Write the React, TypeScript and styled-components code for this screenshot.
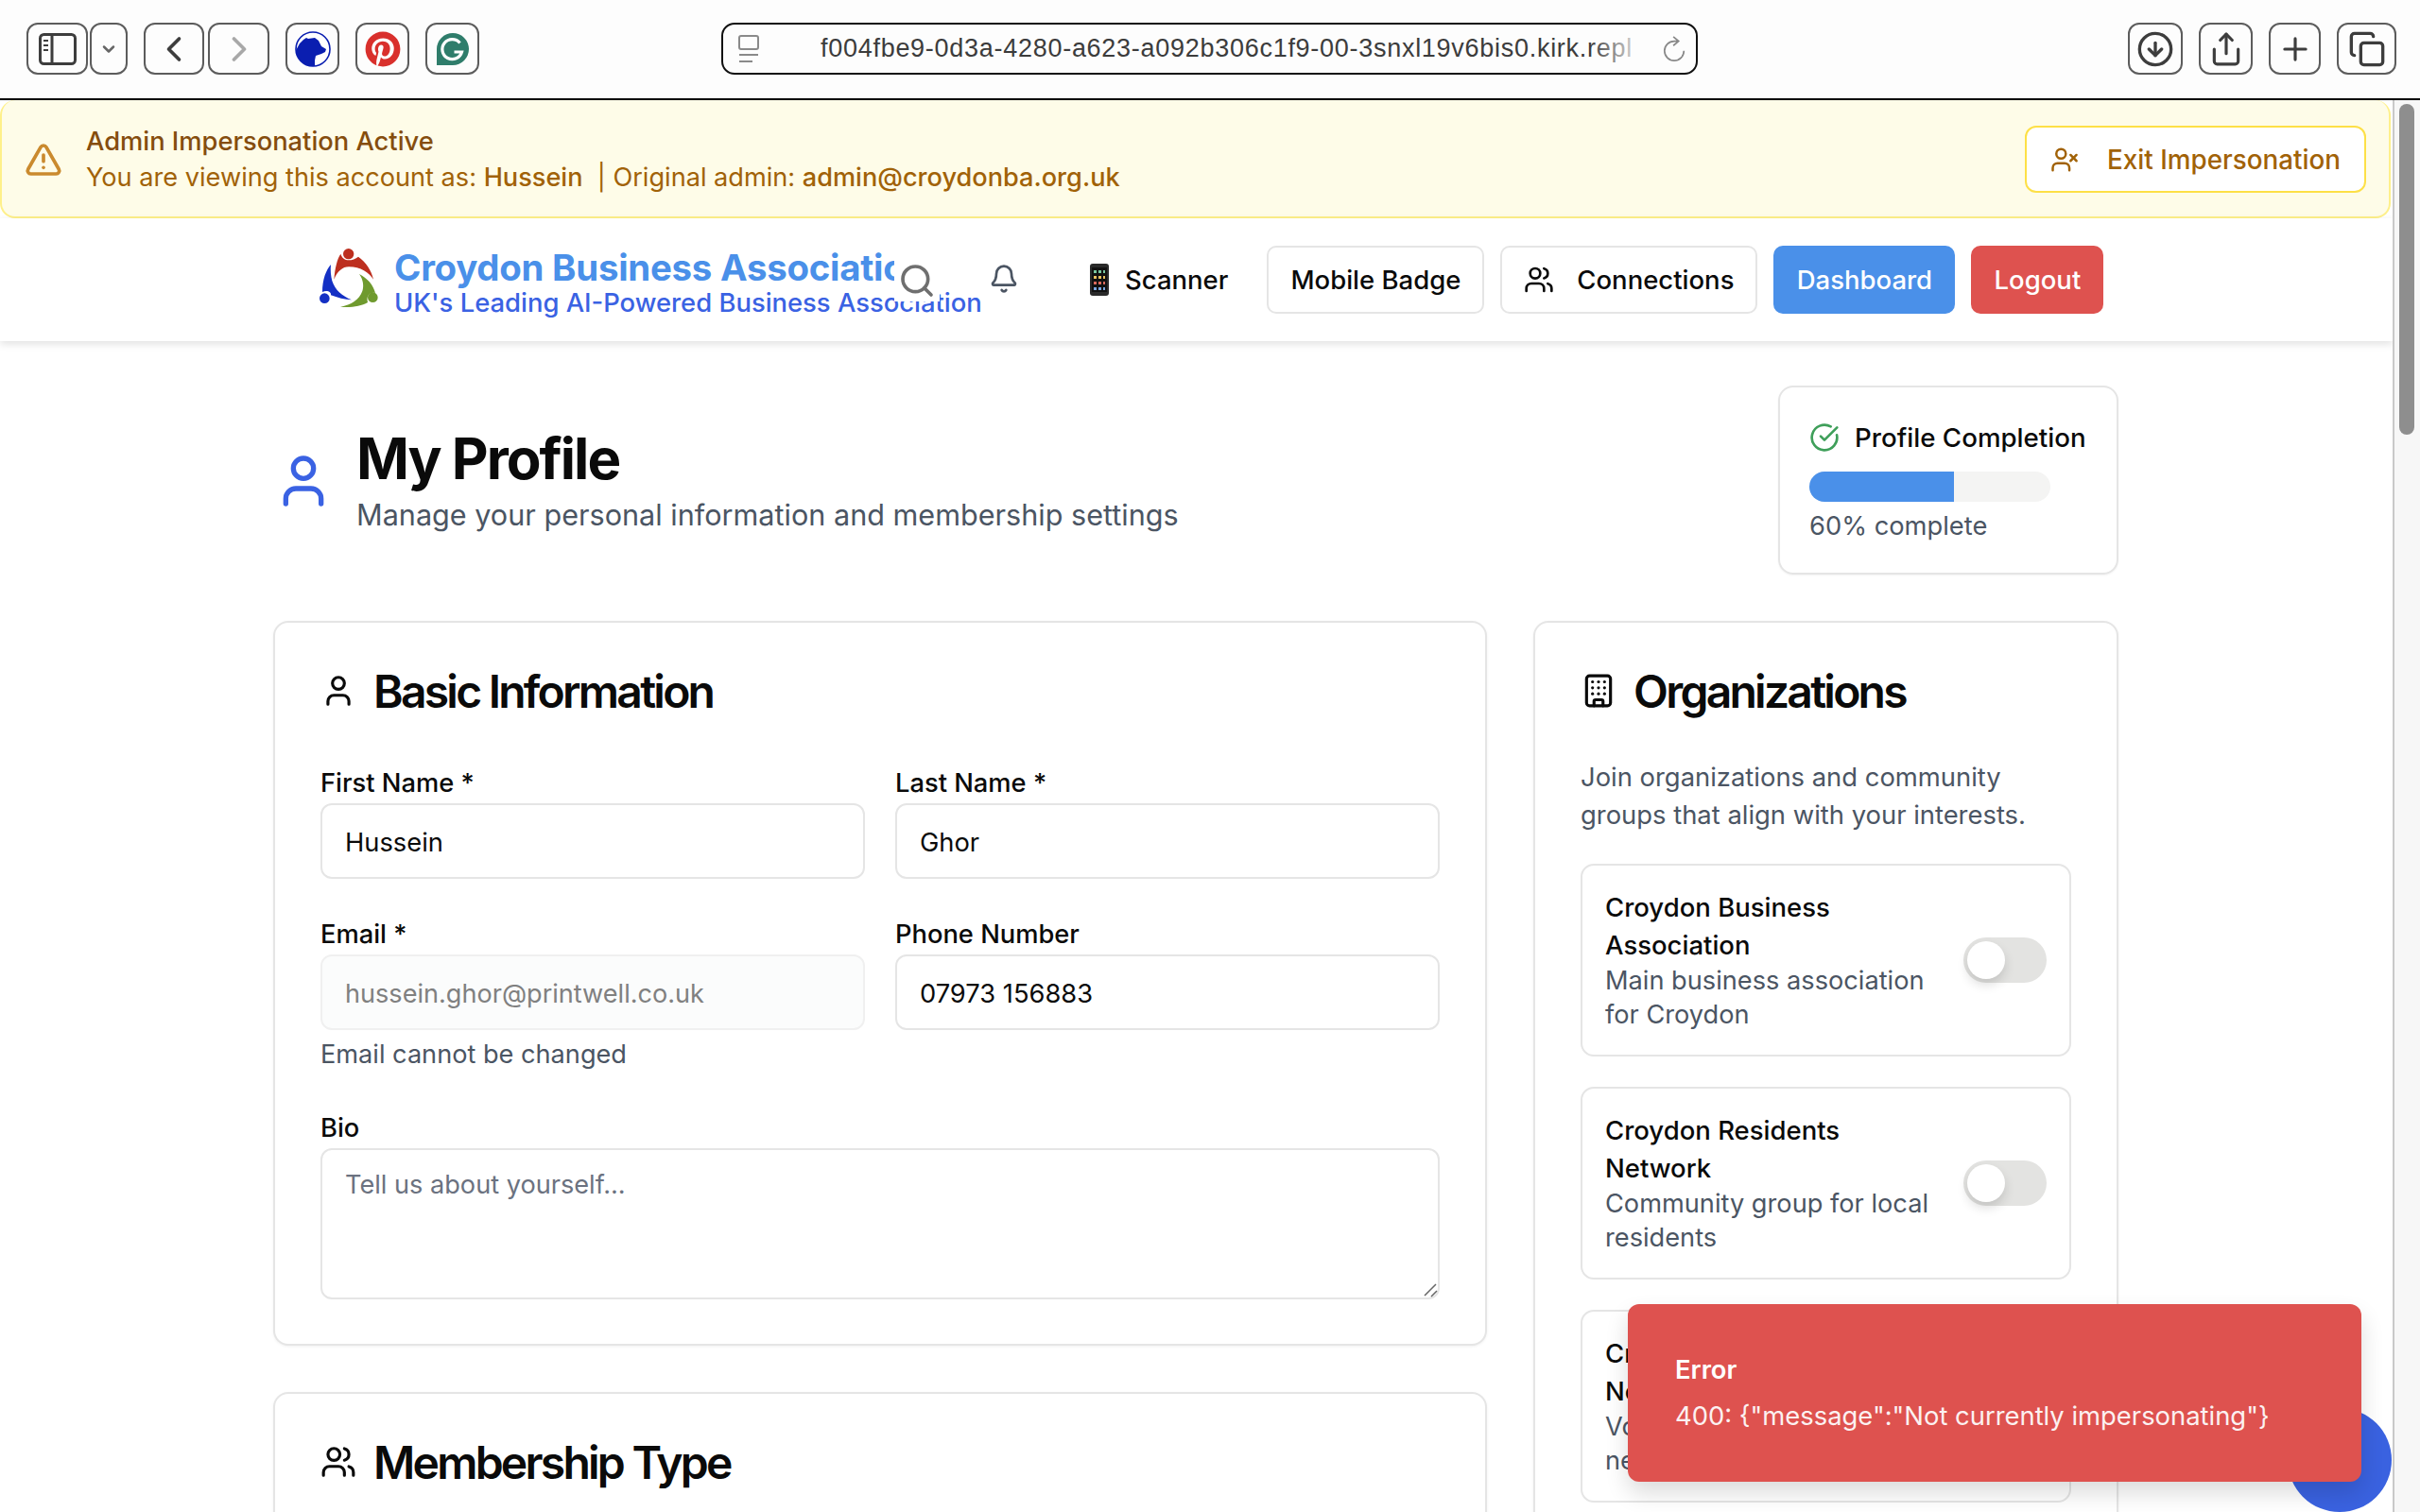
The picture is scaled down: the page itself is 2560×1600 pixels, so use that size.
import React from "react";
import styled, { createGlobalStyle } from "styled-components";
import { FaPinterest } from "react-icons/fa";
import {
  Bell,
  Building,
  ChevronDown,
  ChevronLeft,
  ChevronRight,
  CircleArrowDown,
  CircleCheckBig,
  Copy,
  Plus,
  Search,
  Share,
  TriangleAlert,
  User,
  Users,
  UserX,
} from "lucide-react";

const GlobalStyle = createGlobalStyle`
  html, body {
    margin: 0;
    padding: 0;
    background: #fff;
    overflow: hidden;
  }
  * {
    box-sizing: border-box;
  }
  body {
    font-family: Inter, "Liberation Sans", sans-serif;
    color: #0a0a0a;
  }
`;

const Window = styled.div`
  width: 2560px;
  height: 1600px;
  display: flex;
  flex-direction: column;
  overflow: hidden;
`;

/* safari style bar */
const BrowserBar = styled.div`
  height: 106px;
  flex-shrink: 0;
  background: #fdfdfd;
  border-bottom: 2px solid #000;
  padding: 24px 25px 0 28px;
  display: flex;
  align-items: flex-start;
`;

const BarGroup = styled.div<{ $gap: number; $mr?: number }>`
  display: flex;
  gap: ${(p) => p.$gap}px;
  margin-right: ${(p) => p.$mr ?? 0}px;
`;

const BarButton = styled.div<{ $w: number; $faded?: boolean }>`
  width: ${(p) => p.$w}px;
  height: 55px;
  border: 2px solid #5c5c5c;
  border-radius: 12px;
  display: flex;
  align-items: center;
  justify-content: center;
  color: ${(p) => (p.$faded ? "#a8a8a8" : "#3d3d3d")};
  background: #fdfdfd;
`;

const UrlBar = styled.div`
  width: 1033px;
  height: 55px;
  margin-left: 256px;
  margin-right: 455px;
  border: 2px solid #111;
  border-radius: 14px;
  display: flex;
  align-items: center;
  padding: 0 8px 0 15px;
`;

const UrlText = styled.div`
  flex: 1;
  margin-left: 64px;
  font-family: "Liberation Sans", sans-serif;
  font-size: 27px;
  letter-spacing: 0.72px;
  color: #3c3c3c;
  white-space: nowrap;
  overflow: hidden;
  position: relative;
  &::after {
    content: "";
    position: absolute;
    top: 0;
    right: 0;
    bottom: 0;
    width: 60px;
    background: linear-gradient(to right, rgba(253, 253, 253, 0), #fdfdfd);
  }
`;

const Body = styled.div`
  flex: 1;
  display: flex;
  min-height: 0;
`;

const Viewport = styled.div`
  position: relative;
  flex: 1;
  min-width: 0;
  overflow: hidden;
`;

const ScrollTrack = styled.div`
  width: 29px;
  flex-shrink: 0;
  background: #f7f7f7;
  border-left: 2px solid #c9c9c9;
  padding: 4px 5px 0 5px;
`;

const ScrollThumb = styled.div`
  height: 350px;
  width: 16px;
  border-radius: 8px;
  background: #8e8e8e;
`;

const Banner = styled.div`
  height: 125px;
  background: #fefce8;
  border: 2px solid #fef08a;
  border-top: none;
  border-radius: 16px;
  margin-right: 2px;
  display: flex;
  align-items: center;
  padding: 2px 24px 0 24px;
`;

const BannerIcon = styled(TriangleAlert)`
  color: #ca8a2e;
  flex-shrink: 0;
  margin-right: 25px;
`;

const BannerText = styled.div`
  flex: 1;
  font-size: 27.3px;
  line-height: 38px;
`;

const BannerTitle = styled.div`
  color: #854d0e;
  font-weight: 500;
`;

const BannerLine = styled.div`
  color: #a16207;
  font-size: 27.15px;
  white-space: pre;
`;

const BannerStrong = styled.span`
  font-weight: 500;
`;

const ExitButton = styled.div`
  width: 361px;
  height: 71px;
  background: #fff;
  border: 2px solid #fde047;
  border-radius: 12px;
  display: flex;
  align-items: center;
  padding: 0 25px;
  color: #a16207;
  font-size: 27.8px;
  font-weight: 500;
  gap: 30px;
  white-space: nowrap;
`;

const Nav = styled.div`
  height: 130px;
  background: #fff;
  box-shadow: 0 3px 8px rgba(0, 0, 0, 0.12);
  display: flex;
  align-items: center;
  padding: 0 0 0 325px;
  position: relative;
`;

const BrandLogo = styled.svg`
  width: 90px;
  height: 80px;
  flex-shrink: 0;
  margin-right: 2px;
  margin-top: -4px;
`;

const Brand = styled.div`
  width: 529px;
  flex-shrink: 0;
  white-space: nowrap;
  margin-top: 8px;
`;

const BrandTitle = styled.div`
  font-size: 38.4px;
  line-height: 40px;
  font-weight: 700;
  letter-spacing: -0.25px;
  color: #4a90e9;
`;

const BrandSub = styled.div`
  font-size: 27.4px;
  line-height: 35px;
  font-weight: 500;
  color: #3a62e3;
`;

const SearchButton = styled.div`
  position: relative;
  width: 48px;
  height: 60px;
  margin-top: -14px;
  background: #fff;
  color: #6f6f6f;
  display: flex;
  align-items: flex-end;
  justify-content: center;
  padding-bottom: 2px;
  margin-right: 52px;
`;

const BellButton = styled.div`
  color: #4b5563;
  display: flex;
  margin-right: 75px;
  margin-top: -2px;
`;

const ScannerLink = styled.div`
  display: flex;
  align-items: center;
  font-size: 27.5px;
  font-weight: 500;
  gap: 17px;
  margin-right: 41px;
`;

const NavButton = styled.div<{ $w: number; $bg?: string }>`
  width: ${(p) => p.$w}px;
  height: 72px;
  border-radius: 10px;
  border: ${(p) => (p.$bg ? "none" : "2px solid #e5e5e5")};
  background: ${(p) => p.$bg ?? "#fff"};
  color: ${(p) => (p.$bg ? "#fff" : "#0a0a0a")};
  display: flex;
  align-items: center;
  justify-content: center;
  gap: 24px;
  font-size: 27.5px;
  font-weight: 500;
  margin-right: 17px;
  white-space: nowrap;
`;

const Main = styled.div`
  width: 1952px;
  margin-left: 289px;
  padding-top: 47px;
`;

const Header = styled.div`
  display: flex;
  align-items: center;
  justify-content: space-between;
  height: 200px;
  margin-bottom: 49px;
`;

const HeaderLeft = styled.div`
  display: flex;
  align-items: center;
  margin-top: -4px;
`;

const HeaderIcon = styled(User)`
  color: #3a62e3;
  margin-right: 24px;
  margin-top: 6px;
`;

const PageTitle = styled.h1`
  margin: 0;
  font-size: 60px;
  line-height: 77px;
  font-weight: 700;
  letter-spacing: -2px;
`;

const PageSub = styled.div`
  font-size: 30.6px;
  line-height: 42px;
  color: #4b5563;
`;

const ProgressCard = styled.div`
  width: 360px;
  height: 200px;
  border: 2px solid #e5e5e5;
  border-radius: 16px;
  padding: 33px 31px 0;
  box-shadow: 0 1px 2px rgba(0, 0, 0, 0.05);
`;

const ProgressHead = styled.div`
  display: flex;
  align-items: center;
  gap: 16px;
  font-size: 27.7px;
  font-weight: 500;
  line-height: 40px;
  white-space: nowrap;
  color: #0a0a0a;
`;

const GreenCheck = styled(CircleCheckBig)`
  color: #3f9f5a;
  flex-shrink: 0;
`;

const ProgressTrack = styled.div`
  width: 255px;
  height: 32px;
  margin-top: 16px;
  background: #f4f4f3;
  border-radius: 16px;
  overflow: hidden;
`;

const ProgressFill = styled.div<{ $pct: number }>`
  width: ${(p) => p.$pct}%;
  height: 100%;
  background: #4a90e9;
`;

const ProgressNote = styled.div`
  font-size: 27.3px;
  line-height: 38px;
  margin-top: 7px;
  color: #4b5563;
`;

const Columns = styled.div`
  display: grid;
  grid-template-columns: 1284px 619px;
  gap: 49px;
  align-items: start;
`;

const Column = styled.div`
  display: flex;
  flex-direction: column;
  gap: 49px;
`;

const Card = styled.div<{ $h?: number }>`
  border: 2px solid #e5e5e5;
  border-radius: 16px;
  background: #fff;
  padding: 48px;
  box-shadow: 0 1px 3px rgba(0, 0, 0, 0.06);
  ${(p) => (p.$h ? `height: ${p.$h}px;` : "")}
`;

const CardTitle = styled.div`
  display: flex;
  align-items: center;
  gap: 18px;
  height: 48px;
  font-size: 48px;
  font-weight: 600;
  letter-spacing: -2.75px;
  white-space: nowrap;
`;

const FormGrid = styled.div`
  margin-top: 57px;
  display: grid;
  grid-template-columns: 1fr 1fr;
  column-gap: 32px;
  row-gap: 42px;
`;

const Field = styled.div<{ $wide?: boolean }>`
  ${(p) => (p.$wide ? "grid-column: 1 / -1;" : "")}
`;

const Label = styled.div`
  font-size: 27.3px;
  font-weight: 500;
  line-height: 34px;
  margin-bottom: 4px;
`;

const Input = styled.div<{ $disabled?: boolean }>`
  height: 80px;
  border: 2px solid ${(p) => (p.$disabled ? "#f0f0f0" : "#e5e5e5")};
  border-radius: 12px;
  padding: 2px 24px 0;
  display: flex;
  align-items: center;
  font-size: ${(p) => (p.$disabled ? "27.1px" : "27.3px")};
  color: ${(p) => (p.$disabled ? "#808080" : "#0a0a0a")};
  background: ${(p) => (p.$disabled ? "#fbfcfc" : "#fff")};
`;

const Hint = styled.div`
  font-size: 27.15px;
  line-height: 38px;
  color: #4b5563;
  margin-top: 7px;
`;

const TextArea = styled.div`
  position: relative;
  height: 160px;
  border: 2px solid #e5e5e5;
  border-radius: 12px;
  padding: 20px 24px;
  font-size: 27.15px;
  line-height: 34px;
  color: #6b7280;
`;

const ResizeGrip = styled.svg`
  position: absolute;
  right: 0;
  bottom: 0;
  width: 16px;
  height: 16px;
`;

const OrgIntro = styled.div`
  margin-top: 47px;
  font-size: 27.4px;
  line-height: 40px;
  color: #4b5563;
`;

const OrgList = styled.div`
  margin-top: 32px;
  display: flex;
  flex-direction: column;
  gap: 32px;
`;

const OrgItem = styled.div`
  border: 2px solid #e5e5e5;
  border-radius: 14px;
  height: 204px;
  padding: 24px;
  display: flex;
  align-items: center;
  justify-content: space-between;
`;

const OrgText = styled.div`
  width: 350px;
`;

const OrgName = styled.div`
  font-size: 27.5px;
  font-weight: 500;
  line-height: 40px;
`;

const OrgDesc = styled.div`
  font-size: 27.2px;
  line-height: 36px;
  color: #4b5563;
`;

const Toggle = styled.div`
  width: 88px;
  height: 48px;
  border-radius: 24px;
  background: #e3e3e1;
  padding: 4px;
`;

const ToggleThumb = styled.div`
  width: 40px;
  height: 40px;
  border-radius: 50%;
  background: #fff;
  box-shadow: 0 6px 12px rgba(0, 0, 0, 0.14);
`;

const Fab = styled.div`
  position: absolute;
  right: 1px;
  bottom: 0;
  width: 110px;
  height: 110px;
  border-radius: 50%;
  background: #3a62e0;
`;

const Toast = styled.div`
  position: absolute;
  left: 1722px;
  top: 1274px;
  width: 776px;
  height: 188px;
  background: #de524f;
  border-radius: 12px;
  padding: 51px 50px;
  color: #fff;
  box-shadow: 0 12px 24px rgba(0, 0, 0, 0.14);
`;

const ToastTitle = styled.div`
  font-size: 27.3px;
  font-weight: 600;
  line-height: 38px;
`;

const ToastMsg = styled.div`
  font-size: 27.4px;
  line-height: 38px;
  margin-top: 10px;
  opacity: 0.92;
  white-space: nowrap;
`;

const organizations = [
  {
    name: "Croydon Business Association",
    desc: "Main business association for Croydon",
  },
  {
    name: "Croydon Residents Network",
    desc: "Community group for local residents",
  },
  {
    name: "Croydon Volunteers Network",
    desc: "Volunteer opportunities nearby",
  },
];

const App = () => {
  return (
    <Window>
      <GlobalStyle />
      <BrowserBar>
        <BarGroup $gap={2} $mr={17}>
          <BarButton $w={65}>
            <svg width="40" height="34" viewBox="0 0 40 34" fill="none">
              <rect x="1.5" y="1.5" width="37" height="31" rx="4" stroke="#3d3d3d" strokeWidth="3" />
              <path d="M14 2v30" stroke="#3d3d3d" strokeWidth="3" />
              <path d="M5 8h5M5 13h5M5 18h5" stroke="#3d3d3d" strokeWidth="2" />
            </svg>
          </BarButton>
          <BarButton $w={40}>
            <ChevronDown size={20} strokeWidth={3} color="#666" />
          </BarButton>
        </BarGroup>
        <BarGroup $gap={4} $mr={17}>
          <BarButton $w={64}>
            <ChevronLeft size={44} strokeWidth={2} />
          </BarButton>
          <BarButton $w={65} $faded>
            <ChevronRight size={44} strokeWidth={2} />
          </BarButton>
        </BarGroup>
        <BarGroup $gap={17}>
          <BarButton $w={57}>
            <svg width="38" height="38" viewBox="0 0 38 38">
              <defs>
                <clipPath id="bearClip">
                  <circle cx="19" cy="19" r="18" />
                </clipPath>
              </defs>
              <circle cx="19" cy="19" r="18" fill="#fff" stroke="#0a1eb0" strokeWidth="1.6" />
              <path
                d="M0 22L5 13 9 9l3-2 2 1 7-1 4 3 3 6 5 3-1 3-4 2-6 2-1 5v6H0z"
                fill="#0a1eb0"
                clipPath="url(#bearClip)"
              />
            </svg>
          </BarButton>
          <BarButton $w={57}>
            <FaPinterest size={38} color="#d9302c" />
          </BarButton>
          <BarButton $w={57}>
            <svg width="36" height="36" viewBox="0 0 36 36">
              <path d="M18 1a17 17 0 0 1 0 34H1V18A17 17 0 0 1 18 1z" fill="#2f7d6b" />
              <path
                d="M25.5 11.5a10.5 10.5 0 1 0 2 9.5h-8"
                fill="none"
                stroke="#fff"
                strokeWidth="3.2"
              />
            </svg>
          </BarButton>
        </BarGroup>
        <UrlBar>
          <svg width="24" height="32" viewBox="0 0 24 32" fill="none" stroke="#8a8a8a" strokeWidth="2">
            <rect x="2" y="2" width="20" height="14" rx="2" />
            <path d="M2 22h20M2 29h14" />
          </svg>
          <UrlText>f004fbe9-0d3a-4280-a623-a092b306c1f9-00-3snxl19v6bis0.kirk.repl</UrlText>
          <svg width="28" height="30" viewBox="0 0 30 32" fill="none" stroke="#888" strokeWidth="1.8" style={{ marginLeft: 16 }}>
            <path d="M25 18a11 11 0 1 1-11-11h4M13 2l6 5-6 5" />
          </svg>
        </UrlBar>
        <BarGroup $gap={17}>
          <BarButton $w={58}>
            <CircleArrowDown size={40} strokeWidth={2} />
          </BarButton>
          <BarButton $w={57}>
            <Share size={38} strokeWidth={2} />
          </BarButton>
          <BarButton $w={55}>
            <Plus size={38} strokeWidth={2} />
          </BarButton>
          <BarButton $w={63}>
            <Copy size={40} strokeWidth={2} />
          </BarButton>
        </BarGroup>
      </BrowserBar>

      <Body>
        <Viewport>
          <Banner>
            <BannerIcon size={40} strokeWidth={2.2} />
            <BannerText>
              <BannerTitle>Admin Impersonation Active</BannerTitle>
              <BannerLine>
                You are viewing this account as: <BannerStrong>Hussein</BannerStrong>
                {"  | Original admin: "}
                <BannerStrong>admin@croydonba.org.uk</BannerStrong>
              </BannerLine>
            </BannerText>
            <ExitButton>
              <UserX size={32} strokeWidth={2} />
              Exit Impersonation
            </ExitButton>
          </Banner>

          <Nav>
            <BrandLogo viewBox="0 0 270 240">
              <circle cx="131" cy="44" r="17" fill="#bd2f1f" />
              <path d="M85 125C88 90 95 60 106 44c5 14 14 20 25 20 12 0 22-4 31-11 24 16 42 44 48 72-14-22-40-40-78-40-20 0-36 14-47 40z" fill="#bd2f1f" />
              <circle cx="55" cy="185" r="16" fill="#1430c4" />
              <path d="M75 78C60 95 48 125 48 165c14-8 30 0 27 10 20 8 45 14 66 15-30-12-52-30-62-60-4-16-6-34-4-52z" fill="#1430c4" />
              <circle cx="208" cy="182" r="16" fill="#6f9a2e" />
              <path d="M165 108c25 12 45 35 51 60-16-4-30 8-24 30-22 12-55 18-87 14 35-6 60-22 70-50 5-16 3-36-10-54z" fill="#6f9a2e" />
            </BrandLogo>
            <Brand>
              <BrandTitle>Croydon Business Association</BrandTitle>
              <BrandSub>UK's Leading AI-Powered Business Association</BrandSub>
            </Brand>
            <SearchButton>
              <Search size={40} strokeWidth={2.2} />
            </SearchButton>
            <BellButton>
              <Bell size={32} strokeWidth={2} />
            </BellButton>
            <ScannerLink>
              <svg width="20" height="34" viewBox="0 0 20 34">
                <rect width="20" height="34" rx="3" fill="#2a2a2a" />
                <rect x="2" y="4" width="16" height="26" fill="#111" />
                <path d="M4 7h3v3H4zM9 7h3v3H9zM14 7h2v3h-2z" fill="#7ac7a0" />
                <path d="M4 13h3v3H4zM9 13h3v3H9zM14 13h2v3h-2z" fill="#e8c060" />
                <path d="M4 19h3v3H4zM9 19h3v3H9zM14 19h2v3h-2z" fill="#d96a5c" />
                <path d="M4 25h3v3H4zM9 25h3v3H9zM14 25h2v3h-2z" fill="#7aa6e0" />
              </svg>
              Scanner
            </ScannerLink>
            <NavButton $w={230}>Mobile Badge</NavButton>
            <NavButton $w={272}>
              <Users size={32} strokeWidth={2} />
              Connections
            </NavButton>
            <NavButton $w={192} $bg="#4a90e9">
              Dashboard
            </NavButton>
            <NavButton $w={140} $bg="#de524f">
              Logout
            </NavButton>
          </Nav>

          <Main>
            <Header>
              <HeaderLeft>
                <HeaderIcon size={64} strokeWidth={2} />
                <div>
                  <PageTitle>My Profile</PageTitle>
                  <PageSub>Manage your personal information and membership settings</PageSub>
                </div>
              </HeaderLeft>
              <ProgressCard>
                <ProgressHead>
                  <GreenCheck size={32} strokeWidth={2} />
                  Profile Completion
                </ProgressHead>
                <ProgressTrack>
                  <ProgressFill $pct={60} />
                </ProgressTrack>
                <ProgressNote>60% complete</ProgressNote>
              </ProgressCard>
            </Header>

            <Columns>
              <Column>
                <Card $h={767}>
                  <CardTitle>
                    <User size={38} strokeWidth={2} />
                    Basic Information
                  </CardTitle>
                  <FormGrid>
                    <Field>
                      <Label>First Name *</Label>
                      <Input>Hussein</Input>
                    </Field>
                    <Field>
                      <Label>Last Name *</Label>
                      <Input>Ghor</Input>
                    </Field>
                    <Field>
                      <Label>Email *</Label>
                      <Input $disabled>hussein.ghor@printwell.co.uk</Input>
                      <Hint>Email cannot be changed</Hint>
                    </Field>
                    <Field>
                      <Label>Phone Number</Label>
                      <Input>07973 156883</Input>
                    </Field>
                    <Field $wide>
                      <Label>Bio</Label>
                      <TextArea>
                        Tell us about yourself...
                        <ResizeGrip viewBox="0 0 16 16">
                          <path d="M14 2L2 14M15 9l-6 6" stroke="#666" strokeWidth="1.5" />
                        </ResizeGrip>
                      </TextArea>
                    </Field>
                  </FormGrid>
                </Card>
                <Card>
                  <CardTitle>
                    <Users size={38} strokeWidth={2} />
                    Membership Type
                  </CardTitle>
                </Card>
              </Column>
              <Column>
                <Card>
                  <CardTitle>
                    <Building size={38} strokeWidth={2} />
                    Organizations
                  </CardTitle>
                  <OrgIntro>Join organizations and community groups that align with your interests.</OrgIntro>
                  <OrgList>
                    {organizations.map((org) => (
                      <OrgItem key={org.name}>
                        <OrgText>
                          <OrgName>{org.name}</OrgName>
                          <OrgDesc>{org.desc}</OrgDesc>
                        </OrgText>
                        <Toggle>
                          <ToggleThumb />
                        </Toggle>
                      </OrgItem>
                    ))}
                  </OrgList>
                </Card>
              </Column>
            </Columns>
          </Main>

          <Fab />
          <Toast>
            <ToastTitle>Error</ToastTitle>
            <ToastMsg>400: {'{"message":"Not currently impersonating"}'}</ToastMsg>
          </Toast>
        </Viewport>
        <ScrollTrack>
          <ScrollThumb />
        </ScrollTrack>
      </Body>
    </Window>
  );
};

export default App;
